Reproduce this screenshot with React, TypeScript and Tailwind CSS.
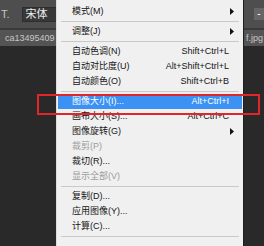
import React from 'react';

type Item =
  | { kind: 'sep' }
  | { kind: 'item'; label: string; shortcut?: string; sub?: boolean; disabled?: boolean; active?: boolean };

const items: Item[] = [
  { kind: 'item', label: '模式(M)', sub: true },
  { kind: 'sep' },
  { kind: 'item', label: '调整(J)', sub: true },
  { kind: 'sep' },
  { kind: 'item', label: '自动色调(N)', shortcut: 'Shift+Ctrl+L' },
  { kind: 'item', label: '自动对比度(U)', shortcut: 'Alt+Shift+Ctrl+L' },
  { kind: 'item', label: '自动颜色(O)', shortcut: 'Shift+Ctrl+B' },
  { kind: 'sep' },
  { kind: 'item', label: '图像大小(I)...', shortcut: 'Alt+Ctrl+I', active: true },
  { kind: 'item', label: '画布大小(S)...', shortcut: 'Alt+Ctrl+C' },
  { kind: 'item', label: '图像旋转(G)', sub: true },
  { kind: 'item', label: '裁剪(P)', disabled: true },
  { kind: 'item', label: '裁切(R)...' },
  { kind: 'item', label: '显示全部(V)', disabled: true },
  { kind: 'sep' },
  { kind: 'item', label: '复制(D)...' },
  { kind: 'item', label: '应用图像(Y)...' },
  { kind: 'item', label: '计算(C)...' },
  { kind: 'sep' },
];

const Arrow = ({ light }: { light?: boolean }) => (
  <svg width="4" height="7" viewBox="0 0 4 7" className="shrink-0">
    <path d="M0 0 L4 3.5 L0 7 Z" fill={light ? '#ffffff' : '#111111'} />
  </svg>
);

export default function App() {
  return (
    <div
      className="relative w-[264px] h-[246px] overflow-hidden bg-[#292929] flex flex-col"
      style={{ fontFamily: '"Liberation Sans", "Noto Sans CJK SC", sans-serif' }}
    >
      {/* options bar */}
      <div className="h-[28px] bg-[#4e4e4e] flex items-center justify-between shrink-0">
        <div className="flex items-center gap-[12px]">
          <span className="text-[11px] leading-none text-[#c4c4c4] pl-[1px]">T.</span>
          <div className="w-[36px] h-[15px] bg-[#383838] border border-[#2e2e2e] flex items-center pl-[3px]">
            <span className="text-[11px] leading-none text-[#ececec]">宋体</span>
          </div>
        </div>
        <div className="w-[10px] h-[12px] bg-[#666666] flex items-center justify-center">
          <span className="text-[10px] leading-none text-white">-</span>
        </div>
      </div>
      <div className="h-[2px] bg-[#3a3a3a] shrink-0" />
      {/* document tab */}
      <div className="h-[16px] bg-[#545454] flex items-center justify-between shrink-0">
        <span className="text-[9px] leading-none text-[#c6c6c6] pl-[5px]">ca13495409</span>
        <span className="text-[9px] leading-none text-[#c6c6c6] pr-[1px]">f.jpg</span>
      </div>
      <div className="flex-1 bg-[#292929]" />

      {/* image menu */}
      <div className="absolute left-[56px] top-0 w-[188px] h-[260px] bg-[#f0f0f0] border-l border-[#dcdcdc] border-r border-r-[#1e1e1e] pt-[4px] px-[1px]">
        {items.map((it, i) =>
          it.kind === 'sep' ? (
            <div key={i} className="h-[5px] flex items-center px-[3px]">
              <div className="h-px w-full bg-[#c9c9c9]" />
            </div>
          ) : (
            <div
              key={i}
              className={`h-[15px] flex items-center pl-[14px] pr-[8px] text-[9px] leading-none ${
                it.active ? 'bg-[#3b92f4] text-white' : it.disabled ? 'text-[#9c9c9c]' : 'text-[#141414]'
              }`}
            >
              <span className="flex-1 whitespace-nowrap">{it.label}</span>
              {it.shortcut && <span className="whitespace-nowrap pr-[5px]">{it.shortcut}</span>}
              {it.sub && <Arrow light={it.active} />}
            </div>
          )
        )}
      </div>

      {/* highlight frame */}
      <div className="absolute left-[37px] top-[94px] w-[223px] h-[21px] border-2 border-[#e0262a]" />
    </div>
  );
}
